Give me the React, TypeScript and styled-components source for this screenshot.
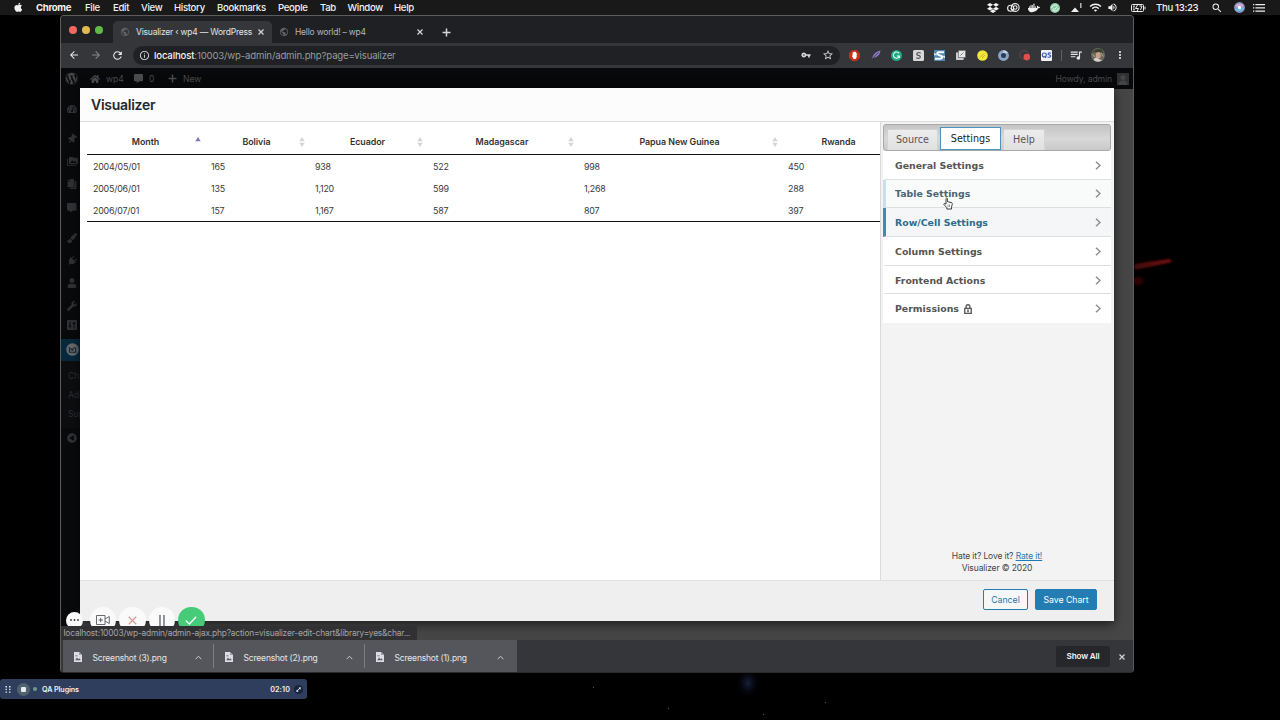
import React from 'react';
import styled, { createGlobalStyle, css } from 'styled-components';
import {
  FaApple, FaDropbox, FaDocker, FaWordpress, FaHome, FaCommentAlt, FaTachometerAlt,
  FaThumbtack, FaCopy, FaPaintBrush, FaPlug, FaUser, FaWrench, FaPlayCircle,
} from 'react-icons/fa';
import {
  MdArrowBack, MdArrowForward, MdRefresh, MdInfoOutline, MdVpnKey, MdStarBorder,
  MdMoreVert, MdQueueMusic, MdWifi, MdVolumeUp, MdPublic, MdPermMedia, MdSearch,
} from 'react-icons/md';

const Global = createGlobalStyle`
  * { box-sizing: border-box; }
  body { margin: 0; background: #000; overflow: hidden; }
  svg { display: block; flex: none; }
  button { font: inherit; margin: 0; padding: 0; border: 0; background: none; color: inherit; }
`;

const Desktop = styled.div`
  position: relative;
  width: 1280px;
  height: 720px;
  overflow: hidden;
  background: #000;
  font-family: Inter, 'Liberation Sans', sans-serif;
  white-space: nowrap;
`;

/* ---------- system menu bar ---------- */
const MenuBar = styled.header`
  display: flex;
  align-items: center;
  height: 15px;
  background: #191919;
  color: #f2f2f2;
  font-size: 9.6px;
  letter-spacing: -0.32px;
  padding-left: 13px;
`;
const MenuItem = styled.span<{ $w: number; $bold?: boolean }>`
  width: ${p => p.$w}px;
  font-weight: ${p => (p.$bold ? 700 : 500)};
`;
const StatusItem = styled.span<{ $w: number }>`
  display: flex;
  width: ${p => p.$w}px;
  justify-content: center;
`;
const StatusIcons = styled.div`
  display: flex;
  align-items: center;
  margin-left: auto;
  padding-right: 16px;
`;

/* ---------- wallpaper ---------- */
const Wallpaper = styled.svg`
  position: absolute;
  inset: 0;
`;

/* ---------- browser window ---------- */
const Window = styled.main`
  position: absolute;
  left: 60px;
  top: 15px;
  width: 1074px;
  height: 658px;
  display: flex;
  flex-direction: column;
  border: 1px solid #5c5c5e;
  border-bottom-color: #2b2b2d;
  border-radius: 4px;
  overflow: hidden;
  background: #202124;
`;
const TabStrip = styled.div`
  display: flex;
  height: 27px;
  background: #1f2024;
`;
const Lights = styled.div`
  display: flex;
  gap: 5px;
  padding: 10px 0 0 8px;
  width: 52px;
`;
const Light = styled.i<{ $c: string }>`
  width: 8px;
  height: 8px;
  border-radius: 50%;
  background: ${p => p.$c};
`;
const BrowserTab = styled.div<{ $active?: boolean }>`
  display: flex;
  align-items: center;
  width: ${p => (p.$active ? 159 : 158)}px;
  height: 22px;
  margin-top: 5px;
  padding: 0 ${p => (p.$active ? 8 : 7)}px 0 7px;
  border-radius: 5px 5px 0 0;
  background: ${p => (p.$active ? '#35363a' : 'transparent')};
  color: ${p => (p.$active ? '#e3e4e6' : '#b4b6b9')};
  font-size: 8.5px;
  letter-spacing: -0.2px;
  svg:first-child { color: #5e6064; margin-right: 6px; }
  svg:last-child { margin-left: auto; color: #d5d5d7; }
`;
const NewTab = styled.div`
  display: flex;
  align-items: center;
  padding: 6px 0 0 11.5px;
`;
const Toolbar = styled.div`
  display: flex;
  align-items: center;
  height: 25px;
  background: #35363a;
  padding-left: 7px;
  color: #e8e8ea;
`;
const NavButton = styled.button<{ $dim?: boolean }>`
  flex: none;
  width: 21.5px;
  color: ${p => (p.$dim ? '#85868a' : '#e8e8ea')};
`;
const Omnibox = styled.div`
  display: flex;
  flex: none;
  align-items: center;
  width: 707px;
  height: 19px;
  margin-right: 4px;
  padding: 0 6px;
  border-radius: 10px;
  background: #202124;
  color: #9a9c9f;
  font-size: 9.6px;
  letter-spacing: -0.16px;
  b { font-weight: 500; color: #f2f2f3; }
  svg { color: #d6d7d9; }
`;
const Url = styled.span`
  flex: 1;
  padding-left: 4.5px;
`;
const OmniIcons = styled.div`
  display: flex;
  align-items: center;
  gap: 11px;
`;
const Extensions = styled.div`
  display: flex;
  align-items: center;
`;
const ExtSlot = styled.div<{ $w?: number }>`
  display: flex;
  justify-content: center;
  width: ${p => p.$w ?? 21.35}px;
`;
const Divider = styled.i`
  width: 1px;
  height: 11px;
  background: #5f6064;
`;

/* ---------- page ---------- */
const Page = styled.div`
  position: relative;
  display: flex;
  flex-direction: column;
  height: 573px;
  background: #464646;
`;
const AdminBar = styled.div`
  display: flex;
  align-items: center;
  height: 21px;
  padding: 1px 4px 0 4px;
  background: #08090b;
  color: #4a4b4d;
  font-size: 8.6px;
`;
const AdminItem = styled.div<{ $w: number }>`
  display: flex;
  align-items: center;
  gap: 6px;
  width: ${p => p.$w}px;
`;
const Howdy = styled.div`
  display: flex;
  align-items: center;
  gap: 5px;
  margin-left: auto;
  letter-spacing: -0.1px;
`;
const Avatar = styled.i`
  display: flex;
  width: 12px;
  height: 12px;
  background: #303132;
`;
const SideNav = styled.nav`
  display: flex;
  flex-direction: column;
  width: 19px;
  flex: 1;
  padding-top: 1px;
  background: #090a0c;
  color: #303235;
`;
const SideIcon = styled.div<{ $h: number; $active?: boolean; $turn?: string }>`
  display: flex;
  align-items: center;
  justify-content: center;
  flex: none;
  height: ${p => p.$h}px;
  padding-left: 3px;
  ${p => p.$active && css`background: #08293d;`}
  svg { transform: ${p => p.$turn ?? 'none'}; }
`;
const SubNav = styled.div`
  display: flex;
  flex-direction: column;
  flex: none;
  padding: 6px 0 4px 7px;
  height: 67px;
  background: #0c0e10;
  font-size: 8.6px;
  line-height: 18.8px;
  color: #2e3033;
`;

/* ---------- modal ---------- */
const Modal = styled.section`
  position: absolute;
  left: 19px;
  top: 20px;
  width: 1034px;
  height: 533px;
  display: flex;
  flex-direction: column;
  background: #fff;
  box-shadow: 0 3px 10px rgba(0, 0, 0, 0.6);
`;
const ModalHeader = styled.div`
  display: flex;
  align-items: center;
  height: 34px;
  padding: 0 11px;
  background: #fcfcfc;
  border-bottom: 1px solid #dcdcdc;
  color: #23282d;
  font-size: 14px;
  font-weight: 600;
  letter-spacing: -0.27px;
`;
const ModalBody = styled.div`
  display: flex;
  height: 458px;
`;
const ChartArea = styled.div`
  width: 800px;
  padding: 6px 0 0 7px;
  overflow: hidden;
`;
const Table = styled.div`
  width: 809px;
  border-bottom: 1.4px solid #111;
  color: #3a3a3a;
  font-size: 8.9px;
`;
const TableRow = styled.div<{ $head?: boolean }>`
  display: grid;
  grid-template-columns: 118px 104px 118px 151px 204px 114px;
  align-items: center;
  height: ${p => (p.$head ? 27 : 22.5)}px;
  ${p => p.$head ? css`
    padding-top: 2px;
    border-bottom: 1.4px solid #111;
    color: #333;
    font-weight: 600;
    letter-spacing: -0.05px;
  ` : css`margin-bottom: -0.1px;`}
  &:last-child { height: 21.8px; }
`;
const HeadCell = styled.div`
  position: relative;
  text-align: center;
  left: -0.5px;
  svg { position: absolute; right: 3.5px; top: 0.5px; }
`;
const Cell = styled.div`
  padding-left: 6px;
  letter-spacing: -0.2px;
`;
const SidePanel = styled.aside`
  display: flex;
  flex-direction: column;
  width: 234px;
  padding: 2px 3px 0 2px;
  border-left: 1px solid #dadada;
  background: #f3f3f3;
`;
const SideTabs = styled.div`
  display: flex;
  flex: none;
  align-items: flex-end;
  height: 27px;
  padding: 0 0 0 3px;
  border: 1px solid #a9a9a9;
  border-radius: 3px;
  background: linear-gradient(#c4c4c4, #d8d8d8 55%, #c9c9c9);
`;
const SideTab = styled.button<{ $w: number; $active?: boolean }>`
  width: ${p => p.$w}px;
  height: ${p => (p.$active ? 23 : 21)}px;
  margin-right: 2px;
  border: 1px solid ${p => (p.$active ? '#4b94bf' : '#d4d4d4')};
  border-bottom: ${p => (p.$active ? '1px solid #4b94bf' : '0')};
  border-radius: ${p => (p.$active ? 0 : '2px 2px 0 0')};
  background: ${p => (p.$active ? '#fff' : 'linear-gradient(#ececec, #e0e0e0)')};
  color: ${p => (p.$active ? '#222' : '#555')};
  font-family: 'DejaVu Sans', sans-serif;
  font-size: 9.6px;
`;
const Group = styled.div<{ $state?: 'hover' | 'active' }>`
  display: flex;
  flex: none;
  align-items: center;
  height: 28.7px;
  padding: 1px 10px 0 9px;
  border-left: 3px solid ${p => (p.$state === 'active' ? '#3f8cb0' : p.$state === 'hover' ? '#c9e0ea' : '#fff')};
  border-bottom: 1px solid #dedede;
  background: ${p => (p.$state === 'active' ? '#f4f6f7' : p.$state === 'hover' ? '#f9fbfb' : '#fff')};
  color: ${p => (p.$state === 'active' ? '#2b6d8d' : p.$state === 'hover' ? '#4c6572' : '#555')};
  font-family: 'DejaVu Sans', sans-serif;
  font-size: 9.4px;
  font-weight: 700;
  svg { margin-left: 5px; }
  svg:last-child { margin-left: auto; }
  &:nth-last-child(2) { border-bottom-color: #fff; }
`;
const Credits = styled.div`
  margin-top: auto;
  padding-bottom: 6px;
  text-align: center;
  color: #444;
  font-size: 8.5px;
  line-height: 12px;
  letter-spacing: -0.12px;
  a { color: #1f7ab4; text-decoration: underline; }
`;
const ModalFooter = styled.div`
  display: flex;
  align-items: center;
  justify-content: flex-end;
  gap: 7px;
  height: 41px;
  padding: 0 17px 2px 0;
  border-top: 1px solid #dfdfdf;
  background: #efefef;
`;
const Action = styled.button<{ $primary?: boolean }>`
  width: ${p => (p.$primary ? 62 : 45)}px;
  height: 21px;
  border: 1px solid #237db3;
  border-radius: 2px;
  background: ${p => (p.$primary ? '#237db3' : '#f6f7f7')};
  color: ${p => (p.$primary ? '#fff' : '#2577a5')};
  font-size: 8.7px;
`;
const Cursor = styled.svg`
  position: absolute;
  left: 882px;
  top: 129px;
`;

/* ---------- overlays on the page ---------- */
const Recorder = styled.div`
  position: absolute;
  left: 5px;
  top: 538px;
  height: 21px;
  display: flex;
  align-items: flex-start;
  gap: 3px;
  overflow: hidden;
`;
const RecButton = styled.div<{ $bg?: string; $small?: boolean }>`
  display: flex;
  align-items: center;
  justify-content: center;
  flex: none;
  width: ${p => (p.$small ? 17 : 26.5)}px;
  height: ${p => (p.$small ? 17 : 26.5)}px;
  margin-top: ${p => (p.$small ? 6 : 1)}px;
  margin-right: ${p => (p.$small ? 3.5 : 0)}px;
  border-radius: 50%;
  background: ${p => p.$bg ?? '#fafafa'};
`;
const StatusBubble = styled.div`
  position: absolute;
  left: 0;
  bottom: 0;
  width: 356px;
  height: 14px;
  padding: 1px 0 0 2.5px;
  background: #313133;
  color: #a2a4a7;
  font-size: 8.4px;
  line-height: 13px;
  letter-spacing: -0.18px;
`;

/* ---------- download shelf ---------- */
const Shelf = styled.div`
  display: flex;
  align-items: center;
  height: 32px;
  padding-left: 2px;
  background: #35363a;
`;
const Download = styled.div<{ $last?: boolean }>`
  position: relative;
  display: flex;
  align-items: center;
  width: ${p => (p.$last ? 152 : 151)}px;
  height: 32px;
  padding: 2px ${p => (p.$last ? 13 : 12)}px 0 11px;
  background: #54565b;
  color: #e6e6e8;
  font-size: 8.5px;
  letter-spacing: -0.18px;
  span { flex: 1; padding: 1px 0 0 10.5px; }
  &::after {
    content: '';
    position: absolute;
    right: 0;
    top: 4px;
    width: 1px;
    height: 24px;
    background: ${p => (p.$last ? 'transparent' : '#7b7d81')};
  }
`;
const ShowAll = styled.button`
  width: 54px;
  height: 21px;
  margin: 0 9px 0 auto;
  border-radius: 2px;
  background: #26272a;
  color: #f1f1f2;
  font-size: 8.2px;
  font-weight: 600;
  letter-spacing: -0.2px;
`;
const ShelfClose = styled.div`
  padding: 1px 8px 0 0;
`;

/* ---------- timer widget ---------- */
const TimerWidget = styled.div`
  position: absolute;
  left: 0;
  top: 679px;
  display: flex;
  align-items: center;
  width: 307px;
  height: 20px;
  padding: 0 4px 0 5px;
  border-radius: 3px;
  background: #2f3e5c;
  color: #eef1f5;
  font-size: 7.2px;
  font-weight: 600;
  letter-spacing: -0.1px;
`;
const StopButton = styled.i`
  display: flex;
  align-items: center;
  justify-content: center;
  width: 13px;
  height: 13px;
  margin: 0 3px 0 6px;
  border-radius: 50%;
  background: #50636f;
  &::after { content: ''; width: 5px; height: 5px; background: #e4eef0; border-radius: 1px; }
`;
const LiveDot = styled.i`
  width: 4px;
  height: 4px;
  margin-right: 5px;
  border-radius: 50%;
  background: #6b9b8b;
`;
const Elapsed = styled.span`
  margin: 0 4px 0 auto;
  letter-spacing: 0.1px;
`;

const Cross = ({ size = 6, color = 'currentColor', w = 1.2 }: { size?: number; color?: string; w?: number }) => (
  <svg width={size} height={size} viewBox="0 0 6 6" fill="none" stroke={color} strokeWidth={w}>
    <path d="M0.5 0.5 5.5 5.5M5.5 0.5 0.5 5.5" />
  </svg>
);
const Chevron = () => (
  <svg width="6" height="9" viewBox="0 0 6 9" fill="none" stroke="#8f8f8f" strokeWidth="1.5"><path d="M1 0.7 5 4.5 1 8.3" /></svg>
);
const Caret = () => (
  <svg width="7" height="5" viewBox="0 0 7 5" fill="none" stroke="#c9cacc" strokeWidth="1"><path d="M0.7 4.2 3.5 1.2 6.3 4.2" /></svg>
);
const Sort = ({ asc }: { asc?: boolean }) => (
  <svg width="6" height="10" viewBox="0 0 6 10">
    <path d="M3 0 5.7 4.3H0.3Z" fill={asc ? '#7d79b8' : '#d5d5d5'} />
    {!asc && <path d="M3 10 0.3 5.7H5.7Z" fill="#d5d5d5" />}
  </svg>
);
const ImageFile = () => (
  <svg width="8" height="10" viewBox="0 0 8 10">
    <path d="M0 0H5L8 3V10H0Z" fill="#dcdde2" />
    <path d="M5 0V3H8" fill="#9c9eaa" />
    <path d="M1.2 8.2 3 5.5 4.4 7.2 5.4 6.2 6.8 8.2Z" fill="#5a5c68" />
    <path d="M1.3 3.8H3.5" stroke="#777988" />
  </svg>
);
const Lock = () => (
  <svg width="8" height="10" viewBox="0 0 7 9" fill="none" stroke="#555">
    <path d="M1.8 4V2.4a1.7 1.7 0 0 1 3.4 0V4" strokeWidth="1.2" />
    <path d="M0.6 4H6.4V8.4H0.6Z" strokeWidth="1.2" />
    <path d="M3.5 5V7.5" strokeWidth="1.4" />
  </svg>
);

const menus: [string, number][] = [
  ['File', 28], ['Edit', 28], ['View', 33], ['History', 43], ['Bookmarks', 61], ['People', 42],
  ['Tab', 27.5], ['Window', 46.5], ['Help', 30],
];
const columns = ['Month', 'Bolivia', 'Ecuador', 'Madagascar', 'Papua New Guinea', 'Rwanda'];
const rows = [
  ['2004/05/01', '165', '938', '522', '998', '450'],
  ['2005/06/01', '135', '1,120', '599', '1,268', '288'],
  ['2006/07/01', '157', '1,167', '587', '807', '397'],
];

const SystemMenu = () => (
  <MenuBar>
    <MenuItem $w={23}><FaApple size={10.5} /></MenuItem>
    <MenuItem $w={49} $bold>Chrome</MenuItem>
    {menus.map(([name, w]) => <MenuItem key={name} $w={w}>{name}</MenuItem>)}
    <StatusIcons>
      <StatusItem $w={18}><FaDropbox size={12} /></StatusItem>
      <StatusItem $w={23}>
        <svg width="13" height="9" viewBox="0 0 13 9" fill="none" stroke="#eee" strokeWidth="1.1">
          <circle cx="3.6" cy="5.2" r="3" /><circle cx="8.2" cy="4.5" r="3.9" /><circle cx="8.2" cy="4.5" r="1.8" /><path d="M3.6 5.2 6 7.6" />
        </svg>
      </StatusItem>
      <StatusItem $w={18}><FaDocker size={12} /></StatusItem>
      <StatusItem $w={23}>
        <svg width="10" height="10" viewBox="0 0 10 10" fill="none">
          <circle cx="5" cy="5" r="5" fill="#8fc9a5" /><path d="M1.6 5a3.5 3.5 0 0 1 6-2M8.4 5a3.5 3.5 0 0 1-6 2M3 5.3 4.4 6.6 7 3.8" stroke="#e9fff1" />
        </svg>
      </StatusItem>
      <StatusItem $w={20}>
        <svg width="11" height="9" viewBox="0 0 11 9" fill="#eee"><path d="M4 4.5 8 9H0ZM9.3 0H10.4V5H9.3Z" /></svg>
      </StatusItem>
      <StatusItem $w={18}><MdWifi size={13} /></StatusItem>
      <StatusItem $w={16}><MdVolumeUp size={11} /></StatusItem>
      <StatusItem $w={36}>
        <svg width="15" height="8" viewBox="0 0 15 8" fill="none" stroke="#eee">
          <rect x="0.5" y="0.5" width="12" height="7" rx="1" /><path d="M6.5 1 4.5 4.5H7.5L6 7.4M2 2.2H4M2 4H3.5M2 5.8H4M8.5 2H11L9.5 6" /><path d="M14 2.6V5.4" />
        </svg>
      </StatusItem>
      <MenuItem $w={53}>Thu 13:23</MenuItem>
      <StatusItem $w={16}><MdSearch size={12} /></StatusItem>
      <StatusItem $w={28}>
        <svg width="11" height="11" viewBox="0 0 11 11" fill="none">
          <circle cx="5.5" cy="5.5" r="5.4" fill="#8f93c4" /><path d="M2 4.5Q5 1 9 4" stroke="#e6a9d6" strokeWidth="1.6" />
          <path d="M1.5 7Q5.5 9.5 9.5 6" stroke="#59c8e8" strokeWidth="1.8" /><circle cx="5.5" cy="5.5" r="1.7" fill="#fff" />
        </svg>
      </StatusItem>
      <StatusItem $w={11}>
        <svg width="12" height="8" viewBox="0 0 12 8" fill="#eee">
          <path d="M0 0H1.3V1.2H0ZM2.4 0H12V1.2H2.4ZM0 3.3H1.3V4.5H0ZM2.4 3.3H12V4.5H2.4ZM0 6.6H1.3V7.8H0ZM2.4 6.6H12V7.8H2.4Z" />
        </svg>
      </StatusItem>
    </StatusIcons>
  </MenuBar>
);

const ExtensionIcons = () => (
  <Extensions>
    <ExtSlot>
      <svg width="11" height="11" viewBox="0 0 11 11"><path d="M3.3 0H7.7L11 3.3V7.7L7.7 11H3.3L0 7.7V3.3Z" fill="#c5301f" /><path d="M3.6 5V2.6H4.5V2H5.3V1.6H6.1V2H7V3H7.7V7L6.6 9H4.6L3 6.2Z" fill="#fff" /></svg>
    </ExtSlot>
    <ExtSlot>
      <svg width="10" height="10" viewBox="0 0 10 10"><path d="M0.5 9.5 2 6Q4 1.5 9.5 0.5 9 5 5 7.3L2.4 7.7Z" fill="#8c7bc4" /><path d="M1 9.2 7.5 2.5" stroke="#3b3450" strokeWidth="0.8" /></svg>
    </ExtSlot>
    <ExtSlot>
      <svg width="11" height="11" viewBox="0 0 11 11" fill="none"><circle cx="5.5" cy="5.5" r="5.5" fill="#23a883" /><path d="M8 3.4A3.1 3.1 0 1 0 8.4 6H5.8M8.4 6V8" stroke="#e3fff6" strokeWidth="1.1" /></svg>
    </ExtSlot>
    <ExtSlot>
      <svg width="11" height="11" viewBox="0 0 11 11" fill="none"><rect width="11" height="11" rx="1.5" fill="#d8d8d8" /><path d="M7.7 3.2Q5.5 1.8 4 3.2 3.2 4.8 5.5 5.4 8 6.2 7 7.6 5.4 9 3.3 7.8" stroke="#555" strokeWidth="1.2" /></svg>
    </ExtSlot>
    <ExtSlot>
      <svg width="11" height="11" viewBox="0 0 11 11" fill="none"><rect width="11" height="11" fill="#4b88b2" /><path d="M0 2.8 3.5 5.2 0 5.2ZM11 8.2 7.5 5.8H11Z" fill="#dcecf5" /><path d="M10 2.2H4.5Q1.8 3.4 4.6 4.8L7.4 6Q9.6 7.8 6.6 8.8H1" stroke="#fff" strokeWidth="2" /></svg>
    </ExtSlot>
    <ExtSlot>
      <svg width="10" height="10" viewBox="0 0 10 10" fill="none"><rect y="2.4" width="7.6" height="7.6" fill="#c9cacc" /><rect x="2.6" y="0.5" width="6.9" height="6.9" fill="#e8e8e9" stroke="#6a6b6e" strokeWidth="0.7" /><path d="M4.4 5.6 7.4 2.6" stroke="#777" strokeWidth="0.9" /></svg>
    </ExtSlot>
    <ExtSlot>
      <svg width="11" height="11" viewBox="0 0 11 11" fill="none"><circle cx="5.5" cy="5.5" r="5.3" fill="#f3e63a" /><path d="M3 7.5 7 3.5M5 8 8 5" stroke="#b3a61d" strokeWidth="0.7" /></svg>
    </ExtSlot>
    <ExtSlot>
      <svg width="11" height="11" viewBox="0 0 11 11"><circle cx="5.5" cy="5.5" r="5.4" fill="#8ba5c4" /><path d="M5.5 0.2A5.3 5.3 0 0 1 10 3H5Z" fill="#c5d3e3" /><circle cx="5.5" cy="5.5" r="2.5" fill="#2b3e59" /></svg>
    </ExtSlot>
    <ExtSlot>
      <svg width="12" height="11" viewBox="0 0 12 11"><circle cx="5.2" cy="5" r="4.4" fill="none" stroke="#55464a" strokeWidth="1.2" /><circle cx="7.8" cy="7.1" r="3.3" fill="#e2504d" /></svg>
    </ExtSlot>
    <ExtSlot>
      <svg width="11" height="11" viewBox="0 0 11 11" fill="none"><rect width="11" height="11" rx="1" fill="#f0f2fa" /><circle cx="3.3" cy="5" r="2" stroke="#3955c0" strokeWidth="1.1" /><path d="M3.6 6 5 8M10 3.2Q7 2.3 7 4.2L9.6 5.5Q10 7.8 6.5 7" stroke="#3955c0" strokeWidth="1.1" /></svg>
    </ExtSlot>
    <ExtSlot $w={9}><Divider /></ExtSlot>
    <ExtSlot $w={21}><MdQueueMusic size={14} /></ExtSlot>
    <ExtSlot $w={23}>
      <svg width="14" height="14" viewBox="0 0 14 14"><circle cx="7" cy="7" r="7" fill="#6c6a5d" /><path d="M1 5Q4 0 10 1L13 5 9 4 7 6 4 4Z" fill="#38412e" /><ellipse cx="7.2" cy="7.4" rx="2.5" ry="3.3" fill="#c79f8b" /><path d="M2.5 12Q4 8.5 7 10.5T11.5 12Q7 15.5 2.5 12Z" fill="#d8cfcb" /><path d="M1.8 6.5 4 9M10 5 12.3 8.5" stroke="#ada58c" /></svg>
    </ExtSlot>
    <ExtSlot $w={20}><MdMoreVert size={12} /></ExtSlot>
  </Extensions>
);

const AdminSide = () => (
  <SideNav>
    <SideIcon $h={38}><FaTachometerAlt size={10} /></SideIcon>
    <SideIcon $h={23} $turn="rotate(35deg)"><FaThumbtack size={10} /></SideIcon>
    <SideIcon $h={22}><MdPermMedia size={11} /></SideIcon>
    <SideIcon $h={23} $turn="scaleX(-1)"><FaCopy size={10} /></SideIcon>
    <SideIcon $h={23}><FaCommentAlt size={9.5} /></SideIcon>
    <SideIcon $h={38}><FaPaintBrush size={10} /></SideIcon>
    <SideIcon $h={8} $turn="rotate(45deg)"><FaPlug size={10} /></SideIcon>
    <SideIcon $h={37}><FaUser size={10} /></SideIcon>
    <SideIcon $h={9}><FaWrench size={10} /></SideIcon>
    <SideIcon $h={28}>
      <svg width="10" height="10" viewBox="0 0 10 10"><rect width="10" height="10" rx="1" fill="#303235" /><path d="M3 1.5V8.5M7 1.5V8.5M1.6 6H4.4M5.6 3.5H8.4" stroke="#090a0c" /></svg>
    </SideIcon>
    <SideIcon $h={22} $active>
      <svg width="13" height="13" viewBox="0 0 13 13" fill="none"><circle cx="6.5" cy="6.5" r="6.3" fill="#66696b" /><path d="M3.5 4V9.3H9.7V4.5M4.5 5.5 6.3 7.2 8.5 4.3" stroke="#162733" strokeWidth="1.1" /></svg>
    </SideIcon>
    <SubNav><span>Charts</span><span>Add New</span><span>Support</span></SubNav>
    <SideIcon $h={20} $turn="scaleX(-1)"><FaPlayCircle size={10} /></SideIcon>
  </SideNav>
);

const VisualizerModal = () => (
  <Modal>
    <ModalHeader>Visualizer</ModalHeader>
    <ModalBody>
      <ChartArea>
        <Table>
          <TableRow $head>
            {columns.map((c, i) => <HeadCell key={c}>{c}{i < 5 && <Sort asc={i === 0} />}</HeadCell>)}
          </TableRow>
          {rows.map(r => <TableRow key={r[0]}>{r.map((v, i) => <Cell key={i}>{v}</Cell>)}</TableRow>)}
        </Table>
      </ChartArea>
      <SidePanel>
        <SideTabs>
          <SideTab $w={51}>Source</SideTab>
          <SideTab $w={61} $active>Settings</SideTab>
          <SideTab $w={42}>Help</SideTab>
        </SideTabs>
        <Group>General Settings<Chevron /></Group>
        <Group $state="hover">Table Settings<Chevron /></Group>
        <Group $state="active">Row/Cell Settings<Chevron /></Group>
        <Group>Column Settings<Chevron /></Group>
        <Group>Frontend Actions<Chevron /></Group>
        <Group>Permissions<Lock /><Chevron /></Group>
        <Credits>Hate it? Love it? <a>Rate it!</a><br />Visualizer © 2020</Credits>
      </SidePanel>
    </ModalBody>
    <ModalFooter>
      <Action>Cancel</Action>
      <Action $primary>Save Chart</Action>
    </ModalFooter>
  </Modal>
);

export default function App() {
  return (
    <Desktop>
      <Global />
      <Wallpaper width="1280" height="720">
        <defs>
          <radialGradient id="glow"><stop offset="0" stopColor="#18203f" /><stop offset="1" stopColor="#000" stopOpacity="0" /></radialGradient>
          <linearGradient id="streak"><stop offset="0" stopColor="#3c0606" /><stop offset="1" stopColor="#7d1310" /></linearGradient>
          <filter id="soft"><feGaussianBlur stdDeviation="1.1" /></filter>
        </defs>
        <ellipse cx="748" cy="683" rx="13" ry="16" fill="url(#glow)" />
        <path d="M1134 264Q1145 262 1170 259L1172 262Q1150 267 1134 270Z" fill="url(#streak)" filter="url(#soft)" />
        <ellipse cx="1138" cy="281" rx="6" ry="4" fill="#2d0404" filter="url(#soft)" />
        <g fill="#55585c"><rect x="668" y="708" width="1" height="1" /><rect x="763" y="714" width="1" height="1" /><rect x="593" y="687" width="1" height="1" /><rect x="825" y="702" width="1" height="1" /></g>
      </Wallpaper>
      <SystemMenu />
      <Window>
        <TabStrip>
          <Lights><Light $c="#ed6a5e" /><Light $c="#e3b84c" /><Light $c="#62ba46" /></Lights>
          <BrowserTab $active><MdPublic size={10} />Visualizer ‹ wp4 — WordPress<Cross /></BrowserTab>
          <BrowserTab><MdPublic size={10} />Hello world! – wp4<Cross /></BrowserTab>
          <NewTab><svg width="9" height="9" viewBox="0 0 9 9" stroke="#d5d6d8" strokeWidth="1.5"><path d="M4.5 0.5V8.5M0.5 4.5H8.5" /></svg></NewTab>
        </TabStrip>
        <Toolbar>
          <NavButton><MdArrowBack size={12} /></NavButton>
          <NavButton $dim><MdArrowForward size={12} /></NavButton>
          <NavButton><MdRefresh size={13} /></NavButton>
          <Omnibox>
            <MdInfoOutline size={11} />
            <Url><b>localhost</b>:10003/wp-admin/admin.php?page=visualizer</Url>
            <OmniIcons><MdVpnKey size={10} /><MdStarBorder size={12} /></OmniIcons>
          </Omnibox>
          <ExtensionIcons />
        </Toolbar>
        <Page>
          <AdminBar>
            <AdminItem $w={25}><FaWordpress size={13} /></AdminItem>
            <AdminItem $w={44}><FaHome size={10} />wp4</AdminItem>
            <AdminItem $w={34}><FaCommentAlt size={9} /><span>0</span></AdminItem>
            <AdminItem $w={40}><svg width="9" height="9" viewBox="0 0 9 9" stroke="#4a4b4d" strokeWidth="1.5"><path d="M4.5 0.5V8.5M0.5 4.5H8.5" /></svg>New</AdminItem>
            <Howdy>Howdy, admin<Avatar><svg width="12" height="12" viewBox="0 0 12 12" fill="#444546"><circle cx="6" cy="4.5" r="2.5" /><path d="M1.5 12Q2 7.5 6 7.5T10.5 12Z" /></svg></Avatar></Howdy>
          </AdminBar>
          <AdminSide />
          <VisualizerModal />
          <Recorder>
            <RecButton $small><svg width="9" height="2" viewBox="0 0 9 2" fill="#333"><circle cx="1" cy="1" r="0.9" /><circle cx="4.5" cy="1" r="0.9" /><circle cx="8" cy="1" r="0.9" /></svg></RecButton>
            <RecButton><svg width="14" height="10" viewBox="0 0 14 10" fill="none" stroke="#555a60" strokeWidth="0.9"><path d="M0.5 0.5H9V9.5H0.5ZM9 4 13.3 1.5V8.5L9 6M4.7 2.8V7.2M2.5 5H7" /></svg></RecButton>
            <RecButton><Cross size={9} color="#d99a94" w={0.8} /></RecButton>
            <RecButton><svg width="6" height="11" viewBox="0 0 6 11" stroke="#777a80" strokeWidth="1.6"><path d="M1 0V11M5 0V11" /></svg></RecButton>
            <RecButton $bg="#46cb78"><svg width="12" height="9" viewBox="0 0 12 9" fill="none" stroke="#fff" strokeWidth="1.3"><path d="M0.8 4.5 4.3 8 11.2 0.8" /></svg></RecButton>
          </Recorder>
          <StatusBubble>localhost:10003/wp-admin/admin-ajax.php?action=visualizer-edit-chart&amp;library=yes&amp;char...</StatusBubble>
          <Cursor width="10" height="13" viewBox="0 0 10 13">
            <path d="M3 7.2V1.5Q3.7 0.4 4.4 1.5V4.7L8.7 5.6Q9.4 6 9.2 7.4L8.5 10.2V12H3.9V10.7L0.8 7.4Q1 6.2 2 6.6Z" fill="#fff" stroke="#111" strokeWidth="0.8" />
            <path d="M5 7.5V10M6.5 7.5V10" stroke="#333" strokeWidth="0.5" />
          </Cursor>
        </Page>
        <Shelf>
          <Download><ImageFile /><span>Screenshot (3).png</span><Caret /></Download>
          <Download><ImageFile /><span>Screenshot (2).png</span><Caret /></Download>
          <Download $last><ImageFile /><span>Screenshot (1).png</span><Caret /></Download>
          <ShowAll>Show All</ShowAll>
          <ShelfClose><Cross color="#d3d4d6" /></ShelfClose>
        </Shelf>
      </Window>
      <TimerWidget>
        <svg width="6" height="7" viewBox="0 0 6 7" fill="#dde3ea"><path d="M0.5 0H2V1.4H0.5ZM4 0H5.5V1.4H4ZM0.5 2.7H2V4.1H0.5ZM4 2.7H5.5V4.1H4ZM0.5 5.4H2V6.8H0.5ZM4 5.4H5.5V6.8H4Z" /></svg>
        <StopButton />
        <LiveDot />
        QA Plugins
        <Elapsed>02:10</Elapsed>
        <svg width="9" height="9" viewBox="0 0 9 9"><circle cx="4.5" cy="4.5" r="4.5" fill="#18243a" /><path d="M2.5 6.5 6.5 2.5M3 4.8V6.3H4.4M4.8 2.9H6.2V4.4" stroke="#eef" fill="none" strokeWidth="0.9" /></svg>
      </TimerWidget>
    </Desktop>
  );
}
